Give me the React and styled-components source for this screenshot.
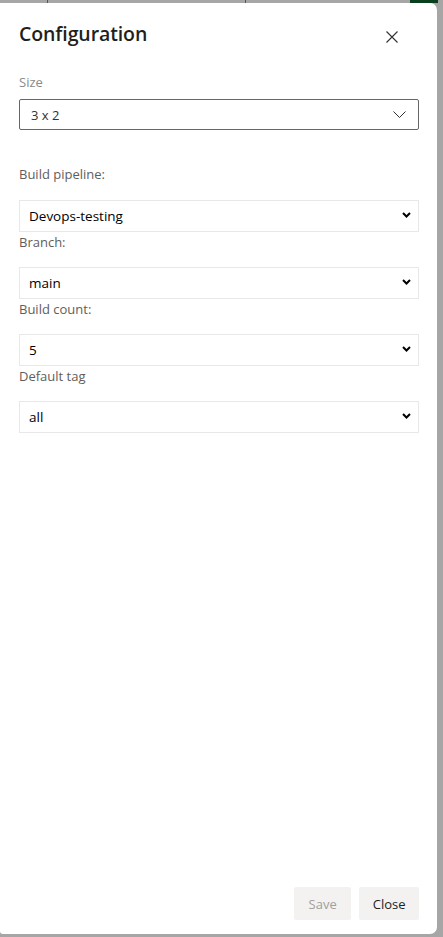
import React, { useState } from 'react';
import styled, { createGlobalStyle } from 'styled-components';

const GlobalStyle = createGlobalStyle`
  html, body {
    margin: 0;
    padding: 0;
    background: #a6a6a6;
  }
  * { box-sizing: border-box; }
`;

const Backdrop = styled.div`
  position: relative;
  width: 443px;
  height: 937px;
  padding: 3px 6px 3px 0;
  background: #a6a6a6;
  font-family: "Open Sans", "Noto Sans", sans-serif;
`;

const Mark = styled.span`
  position: absolute;
  top: 0;
  left: ${p => p.left}px;
  width: ${p => p.w}px;
  height: 3px;
  background: ${p => p.color};
`;

const Panel = styled.div`
  height: 100%;
  background: #fff;
  border-radius: 0 7px 7px 3px;
  display: flex;
  flex-direction: column;
  padding: 0 18px 14px 19px;
  position: relative;
`;

const Header = styled.div`
  display: flex;
  align-items: center;
  justify-content: space-between;
  height: 62px;
  padding-bottom: 2px;
`;

const Title = styled.h1`
  margin: 0;
  font-size: 19.5px;
  font-weight: 600;
  color: #201f1e;
  letter-spacing: -0.1px;
`;

const IconButton = styled.button`
  border: none;
  background: none;
  padding: 0;
  margin-right: 19px;
  margin-top: 8px;
  width: 16px;
  height: 16px;
  display: flex;
  align-items: center;
  justify-content: center;
  cursor: pointer;
`;

const SizeLabel = styled.div`
  font-size: 13px;
  color: #8a8a8a;
  margin: 8px 0 8px;
  line-height: 18px;
`;

const Dropdown = styled.div`
  height: 31px;
  border: 1px solid #666;
  border-radius: 2px;
  display: flex;
  align-items: center;
  justify-content: space-between;
  padding: 0 12px 0 11px;
  font-size: 13px;
  color: #323130;
`;

const Form = styled.div`
  display: flex;
  flex-direction: column;
  margin-top: 35px;
`;

const FieldLabel = styled.label`
  display: block;
  font-size: 13px;
  color: #605e5c;
  line-height: 18px;
  height: 35px;
  padding-top: ${p => (p.first ? 0 : 1)}px;
`;

const SelectWrap = styled.div`
  position: relative;
  width: 400px;
`;

const Select = styled.select`
  appearance: none;
  -webkit-appearance: none;
  width: 100%;
  height: 32px;
  border: 1px solid #e8e8e8;
  border-radius: 0;
  background: #fff;
  font-family: "Open Sans", "Noto Sans", sans-serif;
  font-size: 13.5px;
  color: #000;
  padding: 0 24px 0 9px;
  outline: none;
`;

const Caret = styled.span`
  position: absolute;
  right: 8px;
  top: 12px;
  pointer-events: none;
  display: flex;
`;

const Footer = styled.div`
  margin-top: auto;
  display: flex;
  justify-content: flex-end;
  gap: 8px;
`;

const Button = styled.button`
  height: 33px;
  padding: 0 ${p => p.px}px;
  border: none;
  border-radius: 2px;
  background: #f3f2f1;
  font-family: "Open Sans", "Noto Sans", sans-serif;
  font-size: 13px;
  font-weight: 400;
  color: ${p => (p.disabled ? '#a19f9d' : '#201f1e')};
`;

const fields = [
  { label: 'Build pipeline:', value: 'Devops-testing', options: ['Devops-testing'] },
  { label: 'Branch:', value: 'main', options: ['main'] },
  { label: 'Build count:', value: '5', options: ['5', '10', '15'] },
  { label: 'Default tag', value: 'all', options: ['all'] },
];

const ChevronBold = () => (
  <svg width="9" height="6" viewBox="0 0 9 6">
    <path d="M1 1l3.5 3.5L8 1" fill="none" stroke="#000" strokeWidth="2" />
  </svg>
);

export default function App() {
  const [values, setValues] = useState(fields.map(f => f.value));

  return (
    <>
      <GlobalStyle />
      <Backdrop>
        <Mark left={47} w={1} color="#555" />
        <Mark left={245} w={1} color="#555" />
        <Mark left={410} w={28} color="#0b3d1f" />
        <Panel>
          <Header>
            <Title>Configuration</Title>
            <IconButton aria-label="Close">
              <svg width="12" height="12" viewBox="0 0 12 12">
                <path d="M0.5 0.5l11 11M11.5 0.5l-11 11" stroke="#323130" strokeWidth="1.1" />
              </svg>
            </IconButton>
          </Header>
          <SizeLabel>Size</SizeLabel>
          <Dropdown>
            <span>3 x 2</span>
            <svg width="13" height="7" viewBox="0 0 13 7">
              <path d="M0.5 0.5l6 6 6-6" fill="none" stroke="#323130" strokeWidth="1" />
            </svg>
          </Dropdown>
          <Form>
            {fields.map((f, i) => (
              <div key={f.label}>
                <FieldLabel first={i === 0}>{f.label}</FieldLabel>
                <SelectWrap>
                  <Select
                    value={values[i]}
                    onChange={e => {
                      const next = [...values];
                      next[i] = e.target.value;
                      setValues(next);
                    }}
                  >
                    {f.options.map(o => (
                      <option key={o}>{o}</option>
                    ))}
                  </Select>
                  <Caret><ChevronBold /></Caret>
                </SelectWrap>
              </div>
            ))}
          </Form>
          <Footer>
            <Button px={14.5} disabled>Save</Button>
            <Button px={13.5}>Close</Button>
          </Footer>
        </Panel>
      </Backdrop>
    </>
  );
}
